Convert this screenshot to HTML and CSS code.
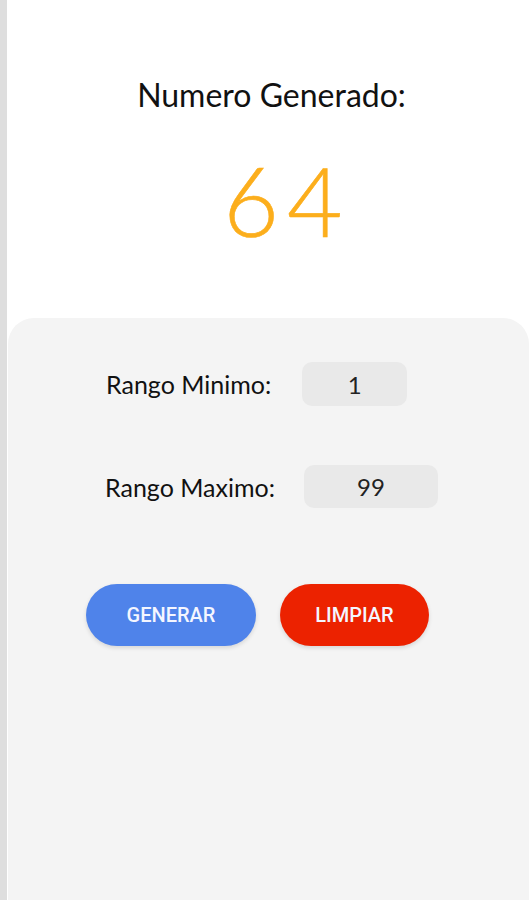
FILE: index.html
```html
<!DOCTYPE html>
<html lang="es">
<head>
<meta charset="utf-8">
<title>Numero Generado</title>
<link rel="stylesheet" href="styles.css">
</head>
<body>
<div class="app">
  <div class="strip"></div>
  <main class="main">
    <section class="result">
      <h1 class="result-title">Numero Generado:</h1>
      <div class="result-number">64</div>
    </section>
    <section class="panel">
      <div class="field field-min">
        <span class="field-label">Rango Minimo:</span>
        <span class="field-input input-min">1</span>
      </div>
      <div class="field field-max">
        <span class="field-label">Rango Maximo:</span>
        <span class="field-input input-max">99</span>
      </div>
      <div class="actions">
        <button class="btn btn-generate">GENERAR</button>
        <button class="btn btn-clear">LIMPIAR</button>
      </div>
    </section>
  </main>
</div>
</body>
</html>
```
FILE: styles.css
```css
* { box-sizing: border-box; }
html, body { margin: 0; padding: 0; }
body {
  background: #ffffff;
  font-family: "Lato", "Noto Sans", sans-serif;
  color: #111;
}
.app {
  display: flex;
  height: 900px;
  overflow: hidden;
}
.strip {
  width: 7px;
  flex: none;
  background: #dedede;
}
.main {
  flex: 1;
  display: flex;
  flex-direction: column;
  background: #ffffff;
}
.result {
  height: 318px;
  flex: none;
  display: flex;
  flex-direction: column;
  align-items: center;
  padding-top: 77px;
}
.result-title {
  margin: 0;
  font-size: 32px;
  font-weight: 400;
  line-height: 36px;
  color: #111;
  padding-left: 7px;
}
.result-number {
  margin-top: 37px;
  font-size: 96px;
  line-height: 100px;
  font-weight: 300;
  letter-spacing: 8px;
  color: #fcae1c;
  padding-left: 38px;
  -webkit-text-stroke: 0.6px #fcae1c;
}
.panel {
  flex: 1;
  margin-left: 1px;
  background: #f4f4f4;
  border-radius: 26px 26px 0 0;
  padding-top: 44px;
  display: flex;
  flex-direction: column;
}
.field {
  display: flex;
  align-items: center;
}
.field-label {
  font-size: 25px;
  color: #111;
}
.field-input {
  display: flex;
  align-items: center;
  justify-content: center;
  background: #e9e9e9;
  border-radius: 10px;
  font-size: 24px;
  color: #222;
}
.field-min {
  padding-left: 98px;
  gap: 31px;
}
.input-min { width: 105px; height: 44px; }
.field-max {
  margin-top: 59px;
  padding-left: 97px;
  gap: 29px;
}
.input-max { width: 134px; height: 43px; }
.actions {
  display: flex;
  gap: 24px;
  margin-top: 76px;
  padding-left: 78px;
}
.btn {
  height: 62px;
  border: none;
  border-radius: 31px;
  color: #f4f6ff;
  font-family: "Roboto", sans-serif;
  font-weight: 500;
  font-size: 20px;
  box-shadow: 0 2px 4px rgba(0,0,0,0.12);
  padding: 0;
}
.btn-generate { width: 170px; background: #4f83ea; }
.btn-clear { width: 149px; background: #ec2200; }
```
